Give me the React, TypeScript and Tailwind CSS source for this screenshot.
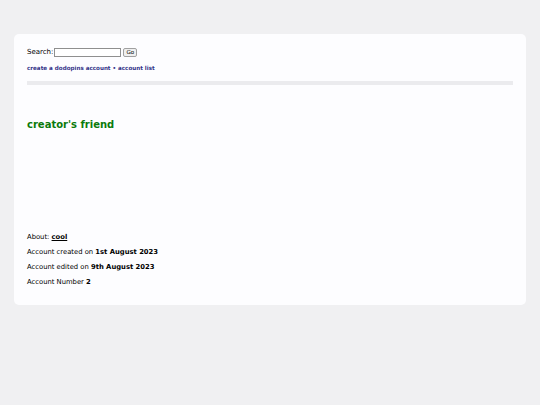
export default function App() {
  return (
    <div
      className="min-h-[405px] bg-[#f0f0f2] px-[14px] pt-[34px] text-black"
      style={{ fontFamily: '"DejaVu Sans", sans-serif' }}
    >
      <div className="rounded-[5px] bg-[#fdfdff] px-[13px] pt-[14px] pb-[18px]">
        <div className="flex items-center text-[7px] leading-[9px]">
          <span>Search:</span>
          <input className="ml-[1px] h-[9px] w-[67px] border border-[#8f8f8f] bg-white" />
          <button className="ml-[2px] h-[9px] w-[14px] rounded-[2px] border border-[#a0a0a0] bg-[#efefef] text-[5.5px] leading-none">
            Go
          </button>
        </div>
        <div className="mt-[8px] text-[5.6px] leading-[7px] font-bold text-[#333388]">
          <a>create a dodopins account</a> • <a>account list</a>
        </div>
        <div className="mt-[9px] h-[4px] bg-[#ebebee]" />
        <h1 className="mt-[33px] text-[10px] leading-[13px] font-bold text-[#0b7a0b]">creator's friend</h1>
        <div className="mt-[102px] flex flex-col gap-[6px] text-[6.8px] leading-[9px]">
          <p>
            About: <b className="underline">cool</b>
          </p>
          <p>
            Account created on <b>1st August 2023</b>
          </p>
          <p>
            Account edited on <b>9th August 2023</b>
          </p>
          <p>
            Account Number <b>2</b>
          </p>
        </div>
      </div>
    </div>
  );
}
